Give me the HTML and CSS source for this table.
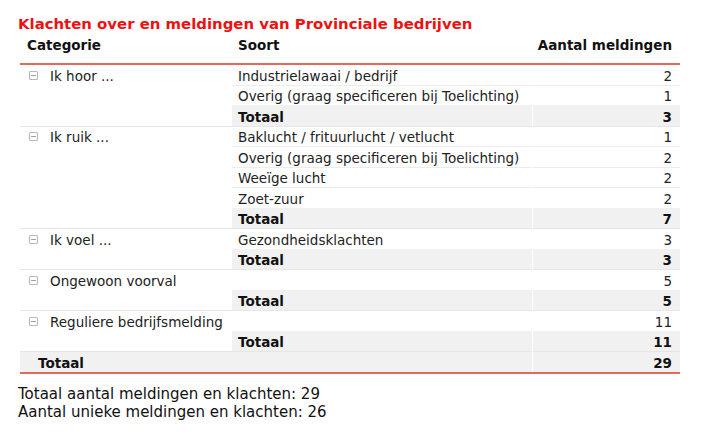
FILE: index.html
```html
<!DOCTYPE html>
<html lang="nl">
<head>
<meta charset="utf-8">
<link rel="stylesheet" href="styles.css">
</head>
<body>
<div class="report">
  <h1 class="title">Klachten over en meldingen van Provinciale bedrijven</h1>
  <table class="grid">
    <colgroup><col class="c1"><col class="c2"><col class="c3"></colgroup>
    <thead>
      <tr><th class="h-cat">Categorie</th><th class="h-soort">Soort</th><th class="h-num">Aantal meldingen</th></tr>
    </thead>
    <tbody>
      <tr class="first"><td class="cat" rowspan="3"><span class="tog"></span>Ik hoor ...</td><td>Industrielawaai / bedrijf</td><td class="num">2</td></tr>
      <tr class="inner"><td>Overig (graag specificeren bij Toelichting)</td><td class="num">1</td></tr>
      <tr class="sub"><td>Totaal</td><td class="num">3</td></tr>

      <tr class="first"><td class="cat" rowspan="5"><span class="tog"></span>Ik ruik ...</td><td>Baklucht / frituurlucht / vetlucht</td><td class="num">1</td></tr>
      <tr class="inner"><td>Overig (graag specificeren bij Toelichting)</td><td class="num">2</td></tr>
      <tr class="inner"><td>Weeïge lucht</td><td class="num">2</td></tr>
      <tr class="inner"><td>Zoet-zuur</td><td class="num">2</td></tr>
      <tr class="sub"><td>Totaal</td><td class="num">7</td></tr>

      <tr class="first"><td class="cat" rowspan="2"><span class="tog"></span>Ik voel ...</td><td>Gezondheidsklachten</td><td class="num">3</td></tr>
      <tr class="sub"><td>Totaal</td><td class="num">3</td></tr>

      <tr class="first"><td class="cat" rowspan="2"><span class="tog"></span>Ongewoon voorval</td><td></td><td class="num">5</td></tr>
      <tr class="sub"><td>Totaal</td><td class="num">5</td></tr>

      <tr class="first"><td class="cat" rowspan="2"><span class="tog"></span>Reguliere bedrijfsmelding</td><td></td><td class="num">11</td></tr>
      <tr class="sub"><td>Totaal</td><td class="num">11</td></tr>

      <tr class="grand"><td class="g-label" colspan="2">Totaal</td><td class="num">29</td></tr>
    </tbody>
  </table>
  <div class="summary">
    <p>Totaal aantal meldingen en klachten: 29</p>
    <p>Aantal unieke meldingen en klachten: 26</p>
  </div>
</div>
</body>
</html>
```

FILE: styles.css
```css
html, body {
  margin: 0;
  padding: 0;
  background: #ffffff;
}
.report {
  padding: 14px 0 0 18px;
  font-family: "DejaVu Sans", Verdana, sans-serif;
  color: #222;
}
.title {
  margin: 0;
  font-size: 14.9px;
  font-weight: bold;
  color: #ee1111;
  line-height: 20px;
}
.grid {
  margin-left: 2px;
  border-collapse: collapse;
  table-layout: fixed;
  width: 660px;
  font-size: 13.5px;
}
.c1 { width: 212px; }
.c2 { width: 300px; }
.c3 { width: 148px; }
.grid th {
  font-weight: bold;
  text-align: left;
  line-height: 16px;
  padding: 3px 0 10px 0;
  vertical-align: top;
  border-bottom: 2px solid #e06a5e;
  color: #111;
}
.grid th.h-cat { padding-left: 7px; }
.grid th.h-soort { padding-left: 6px; }
.grid th.h-num { text-align: right; padding-right: 8px; }
.grid td {
  padding: 2.5px 0 0 6px;
  line-height: 17px;
  white-space: nowrap;
  vertical-align: top;
}
.grid td.num {
  text-align: right;
  padding-right: 8px;
  border-left: 1px solid #fff;
}
.grid td.cat {
  padding-left: 9px;
  border-top: 1px solid #e6e6e6;
}
.grid tr.first td { border-top: 1px solid #e6e6e6; }
.grid tbody tr.first:first-child td { border-top: 1px solid #fff; }
.grid tr.inner td { border-top: 1px solid #ececec; }
.grid tr.sub td {
  background: #f2f1f2;
  font-weight: bold;
  color: #111;
  border-top: 1px solid #f2f1f2;
}
.grid tr.grand td {
  background: #f2f1f2;
  font-weight: bold;
  color: #111;
  border-top: 1px solid #e6e6e6;
  border-bottom: 2px solid #e06a5e;
}
.grid tr.grand td.g-label { padding-left: 18px; }
.tog {
  display: inline-block;
  box-sizing: border-box;
  width: 9px;
  height: 9px;
  border: 1px solid #b8b8b8;
  border-radius: 1px;
  margin-right: 12px;
  position: relative;
  top: -1px;
  background: linear-gradient(#a0a0a0, #a0a0a0) center / 5px 1px no-repeat;
}
.summary {
  margin-top: 11px;
  font-size: 15px;
  line-height: 18px;
  color: #111;
}
.summary p { margin: 0; }
```
